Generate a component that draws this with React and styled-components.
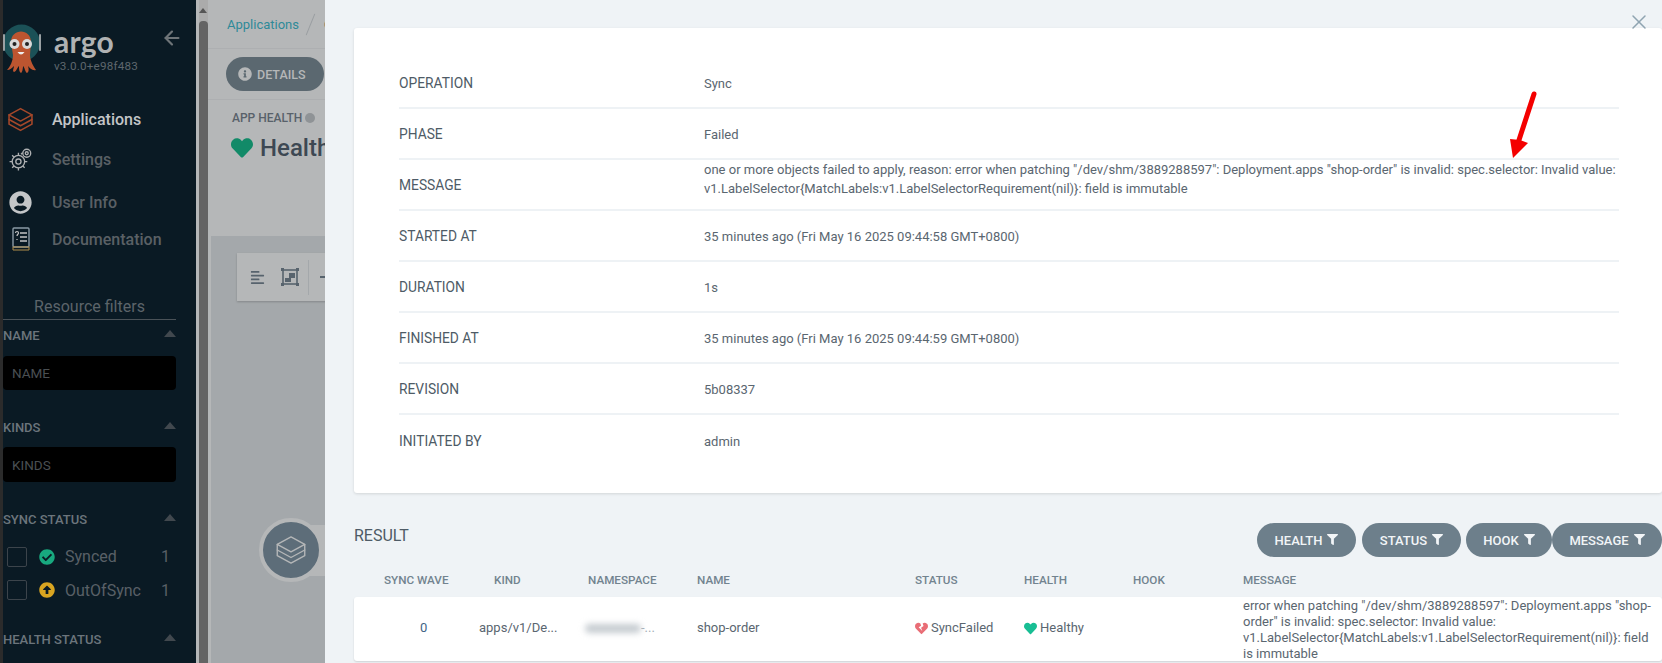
import React from 'react';
import styled, { createGlobalStyle } from 'styled-components';
import { X, ArrowLeft } from 'lucide-react';
import { FaHeart, FaHeartBroken, FaFilter, FaInfoCircle, FaUserCircle, FaCheckCircle, FaArrowAltCircleUp, FaAlignLeft } from 'react-icons/fa';

const Global = createGlobalStyle`
  html, body { margin: 0; padding: 0; height: 663px; overflow: hidden; background: #a4a8ab; }
  body { font-family: Roboto, "Liberation Sans", sans-serif; }
  * { box-sizing: border-box; }
  svg { flex: none; }
`;

const Page = styled.div`
  display: flex; width: 1662px; height: 663px; overflow: hidden; position: relative;
`;
const Sidebar = styled.aside`
  width: 196px; flex: none; background: #0a1a24; border-left: 3px solid #2b2b2b; color: #7c8287;
  display: flex; flex-direction: column; overflow: hidden;
`;
const Brand = styled.div`
  display: flex; height: 96px; padding: 26px 0 0 0; position: relative; flex: none;
`;
const BrandText = styled.div`
  margin-left: 51px; display: flex; flex-direction: column;
`;
const Wordmark = styled.div`
  font-family: Lato, sans-serif; font-size: 30px; font-weight: 700; line-height: 30px; height: 30px; color: #b0b2b3; letter-spacing: 0.2px;
`;
const Version = styled.div`
  font-size: 11.7px; line-height: 14px; margin-top: 3px; color: #5e666c; letter-spacing: 0.2px;
`;
const BackIcon = styled.div`
  position: absolute; left: 158px; top: 27px; color: #6e7478; display: flex;
`;
const Logo = styled.div`
  position: absolute; left: 0; top: 24px;
`;
const NavList = styled.nav`
  display: flex; flex-direction: column; flex: none;
`;
const NavRow = styled.div`
  display: flex; align-items: center; height: ${p => p.$h}px; color: ${p => p.$active ? '#c3c5c7' : '#5a6065'};
  font-size: 16px; font-weight: 500;
`;
const NavIcon = styled.span`
  width: 49px; display: flex; justify-content: center; padding-right: 14px; flex: none;
`;
const FilterTitle = styled.div`
  margin: 46px 0 0 0; width: 173px; text-align: center; border-bottom: 1px solid #4a5258; font-size: 16px; line-height: 21px; padding-bottom: 2px; color: #5c646a; flex: none;
`;
const SectionHead = styled.div`
  display: flex; justify-content: space-between; align-items: center; width: 173px; font-size: 13px; font-weight: 500; color: #6c757c;
  margin-top: ${p => p.$mt}px; height: 16px; flex: none;
`;
const Caret = styled.span`
  width: 0; height: 0; border-left: 6px solid transparent; border-right: 6px solid transparent; border-bottom: 7px solid #41484e; margin-bottom: 3px;
`;
const FilterInput = styled.div`
  width: 173px; height: ${p => p.$h}px; background: #000; border-radius: 4px; margin-top: ${p => p.$mt}px; padding-left: 9px; display: flex; align-items: center; font-size: 13.5px; color: #4a4f53; flex: none;
`;
const CheckRow = styled.div`
  display: flex; align-items: center; height: ${p => p.$h}px; margin-top: ${p => p.$mt || 0}px; width: 173px; padding-left: 4px; font-size: 16px; color: #596067; flex: none;
`;
const CheckBox = styled.span`
  width: 20px; height: 20px; border: 1px solid #3c444b; border-radius: 2px; margin-right: 12px; flex: none;
`;
const CheckLabel = styled.span`
  flex: 1; margin-left: 10px;
`;
const CheckCount = styled.span`
  padding-right: 6px;
`;
const Main = styled.main`
  width: 129px; flex: none; display: flex; background: #a4a8ab;
`;
const Scrollbar = styled.div`
  width: 12px; flex: none; position: relative; background: #ababab; border-left: 3px solid #b5b7b8;
`;
const ScrollThumb = styled.div`
  position: absolute; left: 0; right: 0; top: 21px; bottom: 0; background: #646464; border-radius: 4px 4px 0 0;
`;
const ScrollArrow = styled.div`
  position: absolute; left: 0; top: 8px; width: 0; height: 0; border-left: 4.5px solid transparent; border-right: 4.5px solid transparent; border-bottom: 5px solid #555;
`;
const MainBody = styled.div`
  flex: 1; min-width: 0; display: flex; flex-direction: column;
`;
const TopArea = styled.div`
  background: #b5b7b8; height: 236px; flex: none; display: flex; flex-direction: column; overflow: hidden; white-space: nowrap;
`;
const Crumb = styled.div`
  height: 49px; flex: none; padding: 0 0 0 19px; display: flex; align-items: center; font-size: 13px; color: #2f8a98; border-bottom: 1px solid #adafb1;
`;
const Slash = styled.span`
  width: 1px; height: 23px; background: #9a9ea1; transform: rotate(22deg); margin: 0 13px 0 11px; flex: none;
`;
const CrumbTail = styled.span`
  color: #333d47;
`;
const ToolRow = styled.div`
  height: 51px; flex: none; padding: 8px 0 0 18px; border-bottom: 1px solid #adafb1;
`;
const DetailsPill = styled.div`
  display: flex; align-items: center; gap: 5px; width: 98px; height: 34px; padding-left: 12px; border-radius: 17px; background: #5b6870; color: #b5b7b8; font-size: 12.5px; font-weight: 500;
`;
const HealthLabel = styled.div`
  margin: 11px 0 0 24px; font-size: 12px; line-height: 14px; font-weight: 500; color: #58616a; display: flex; align-items: center; gap: 3px;
`;
const Dot = styled.span`
  width: 10px; height: 10px; border-radius: 50%; background: #8f9396;
`;
const HealthValue = styled.div`
  margin: 9px 0 0 23px; display: flex; align-items: center; gap: 7px; font-size: 24px; line-height: 28px; font-weight: 500; color: #3d4853;
`;
const Canvas = styled.div`
  flex: 1; position: relative; border-left: 3px solid #b5b7b8; overflow: hidden;
`;
const GraphTools = styled.div`
  position: absolute; left: 26px; top: 17px; width: 100px; height: 48px; background: #b5b7b8; box-shadow: 0 1px 2px rgba(0,0,0,.2); display: flex; align-items: center; padding-left: 13px; gap: 16px; color: #57636d;
`;
const ToolSep = styled.span`
  width: 1px; height: 35px; background: #a4a8ab; margin-left: -7px; flex: none;
`;
const ToolDash = styled.span`
  width: 6px; height: 2px; background: #57636d; margin-left: -5px; flex: none;
`;
const NodeBand = styled.div`
  position: absolute; left: 90px; top: 289px; width: 30px; height: 51px; background: #b5b7b8;
`;
const NodeCircle = styled.div`
  position: absolute; left: 48px; top: 282px; width: 64px; height: 64px; border-radius: 50%; background: #5d6d79; border: 4px solid #b5b7b8; display: flex; align-items: center; justify-content: center;
`;
const Slide = styled.section`
  flex: 1; background: #eff3f6; padding: 28px 0 0 29px; min-width: 0; overflow: hidden;
`;
const CloseBtn = styled.div`
  position: absolute; top: 10px; right: 11px; color: #8fa4b1; display: flex;
`;
const Card = styled.div`
  width: 1308px; height: 465px; background: #fff; border-radius: 3px; box-shadow: 0 1px 3px rgba(0,0,0,.12); padding: 30px 43px 0 45px;
`;
const InfoRow = styled.div`
  display: flex; align-items: center; height: 51px; padding-top: 1px; border-bottom: ${p => p.$last ? 'none' : '2px solid #eef2f5'}; color: #5a6670; font-size: 13px; line-height: 19px;
`;
const InfoKey = styled.div`
  width: 305px; flex: none; text-transform: uppercase; font-size: 13.8px; color: #4e5b66;
`;
const InfoVal = styled.div`
  flex: 1; margin-bottom: ${p => p.$raised ? 12 : 0}px;
`;
const ResultHead = styled.div`
  width: 1308px; height: 72px; padding-top: 30px; display: flex; justify-content: space-between; align-items: flex-start;
`;
const ResultTitle = styled.div`
  font-size: 16px; line-height: 18px; margin-top: 4px; color: #4e5b66;
`;
const Pills = styled.div`
  display: flex;
`;
const Pill = styled.div`
  display: flex; align-items: center; justify-content: center; gap: 5px; width: ${p => p.$w}px; height: 34px; border-radius: 17px; background: #6d7f8b; color: #f2f5f7; font-size: 13px; font-weight: 500; margin-left: ${p => p.$ml || 0}px;
  svg { transform: translateY(-1px); }
`;
const Grid = styled.div`
  display: grid; grid-template-columns: 125px 106px 112px 218px 109px 109px 110px 1fr; width: 1308px;
`;
const HeadRow = styled(Grid)`
  height: 32px; padding-bottom: 2px; align-items: center; font-size: 11.7px; font-weight: 500; color: #72838f;
`;
const Cell = styled.div`
  padding-left: ${p => p.$pl || 0}px;
`;
const DataRow = styled(Grid)`
  background: #fff; height: 64px; border-radius: 3px; align-items: center; font-size: 13px; color: #5a6670; box-shadow: 0 1px 2px rgba(0,0,0,.14); line-height: 16px; padding-right: 10px;
  & > * { margin-bottom: 3px; }
  & > :last-child { margin-bottom: 0; margin-top: 1px; }
`;
const WaveCell = styled.div`
  padding-left: 66px; color: #3f6485;
`;
const StatusCell = styled.div`
  display: flex; align-items: center; gap: 3px;
`;
const NamespaceCell = styled.div`
  display: flex; align-items: center; color: #a3adb5;
`;
const Redacted = styled.div`
  width: 56px; height: 9px; border-radius: 5px; background: #c5cbd0; filter: blur(3px);
`;
const Arrow = styled.svg`
  position: absolute; left: 1505px; top: 88px;
`;

const StackIcon = ({ size, color, width = 1.5 }) => (
  <svg width={size} height={size} viewBox="0 0 24 24" fill="none" stroke={color} strokeWidth={width} strokeLinejoin="round" strokeLinecap="round">
    <path d="M12 1.500 L23 7.500 L12 13.500 L1 7.500 Z" />
    <path d="M1 7.500 V16.500 L12 22.500 L23 16.500 V7.500" />
    <path d="M1 12 L12 18 L23 12" />
  </svg>
);
const ArgoLogo = () => (
  <svg width="41" height="50" viewBox="0 0 41 50">
    <circle cx="18.500" cy="19" r="18.500" fill="#1b5157" />
    <rect x="0" y="10" width="2" height="17" fill="#9aa0a3" rx="1" />
    <rect x="36" y="10" width="2" height="17" fill="#9aa0a3" rx="1" />
    <path d="M8 18 C8 4 28 4 28 18 L27 31 C27 37 31 43 33 46 C29 47 27 44 25 42 C26 45 26 48 24 49 C22 48 22 44 20 42 C20 45 19 49 18 49 C16 48 16 45 16 42 C14 44 13 48 11 48 C9 47 11 44 11 42 C9 44 7 46 4 46 C7 43 10 37 10 31 Z" fill="#bc5530" />
    <circle cx="11.500" cy="20" r="5" fill="#d9d9d9" />
    <circle cx="24" cy="20" r="5" fill="#d9d9d9" />
    <circle cx="11.500" cy="20" r="2" fill="#222" />
    <circle cx="24" cy="20" r="2" fill="#222" />
    <path d="M14.500 28 Q18 33 21.500 28 Z" fill="#eee" />
  </svg>
);
const GearIcon = () => (
  <svg width="25" height="25" viewBox="0 0 24 24" fill="none" stroke="#aeb0b2" strokeWidth="1.300">
    <circle cx="10" cy="14" r="6" />
    <circle cx="10" cy="14" r="2.500" />
    <circle cx="18" cy="6" r="3.800" />
    <circle cx="18" cy="6" r="1.400" />
    <path d="M10 5.500v2.500M10 20v2.500M1.500 14H4M16 14h2.500M4 8l1.800 1.800M4 20l1.800-1.800M16 20l-1.800-1.800M12.500 7l1.500-1.500" />
  </svg>
);
const DocIcon = () => (
  <svg width="18" height="24" viewBox="0 0 18 24" fill="none">
    <rect x="1" y="1" width="16" height="19" rx="1" stroke="#8a9aa5" strokeWidth="1.400" />
    <path d="M1 20h16v3H1z" stroke="#b08d4a" strokeWidth="1" />
    <path d="M8 6h7M8 10h7M8 14h7" stroke="#c4c4c4" strokeWidth="1.400" />
    <path d="M3.500 6c0-2 3-2 3 0 0 1.300-1.500 1.300-1.500 3M5 12v1" stroke="#c4c4c4" strokeWidth="1.200" />
  </svg>
);
const FitIcon = () => (
  <svg width="18" height="18" viewBox="0 0 18 18" fill="none" stroke="#57636d">
    <rect x="2" y="2" width="14" height="14" strokeWidth="1.600" />
    <path d="M8 5h6v5H8zM4 10h6v4H4z" fill="#57636d" stroke="none" />
    <path d="M0 0h3v3H0zM15 0h3v3h-3zM0 15h3v3H0zM15 15h3v3h-3z" fill="#57636d" stroke="none" />
  </svg>
);

const infos = [
  ['Operation', 'Sync'],
  ['Phase', 'Failed'],
  ['Message', 'one or more objects failed to apply, reason: error when patching "/dev/shm/3889288597": Deployment.apps "shop-order" is invalid: spec.selector: Invalid value: v1.LabelSelector{MatchLabels:v1.LabelSelectorRequirement(nil)}: field is immutable', true],
  ['Started at', '35 minutes ago (Fri May 16 2025 09:44:58 GMT+0800)'],
  ['Duration', '1s'],
  ['Finished at', '35 minutes ago (Fri May 16 2025 09:44:59 GMT+0800)'],
  ['Revision', '5b08337'],
  ['Initiated by', 'admin'],
];

export default function App() {
  return (
    <Page>
      <Global />
      <Sidebar>
        <Brand>
          <Logo><ArgoLogo /></Logo>
          <BrandText>
            <Wordmark>argo</Wordmark>
            <Version>v3.0.0+e98f483</Version>
          </BrandText>
          <BackIcon><ArrowLeft size={22} strokeWidth={2.4} /></BackIcon>
        </Brand>
        <NavList>
          <NavRow $active $h={46}><NavIcon><StackIcon size={25} color="#a5482a" /></NavIcon>Applications</NavRow>
          <NavRow $h={34}><NavIcon><GearIcon /></NavIcon>Settings</NavRow>
          <NavRow $h={52}><NavIcon><FaUserCircle size={23} color="#c4c6c8" /></NavIcon>User Info</NavRow>
          <NavRow $h={22}><NavIcon><DocIcon /></NavIcon>Documentation</NavRow>
        </NavList>
        <FilterTitle>Resource filters</FilterTitle>
        <SectionHead $mt={7}>NAME<Caret /></SectionHead>
        <FilterInput $h={34} $mt={13}>NAME</FilterInput>
        <SectionHead $mt={29}>KINDS<Caret /></SectionHead>
        <FilterInput $h={35} $mt={12}>KINDS</FilterInput>
        <SectionHead $mt={29}>SYNC STATUS<Caret /></SectionHead>
        <CheckRow $h={33} $mt={13}><CheckBox /><FaCheckCircle size={16} color="#18a97f" /><CheckLabel>Synced</CheckLabel><CheckCount>1</CheckCount></CheckRow>
        <CheckRow $h={34}><CheckBox /><FaArrowAltCircleUp size={16} color="#d9a521" /><CheckLabel>OutOfSync</CheckLabel><CheckCount>1</CheckCount></CheckRow>
        <SectionHead $mt={24}>HEALTH STATUS<Caret /></SectionHead>
      </Sidebar>
      <Main>
        <Scrollbar><ScrollArrow /><ScrollThumb /></Scrollbar>
        <MainBody>
          <TopArea>
            <Crumb>Applications<Slash /><CrumbTail>C</CrumbTail></Crumb>
            <ToolRow><DetailsPill><FaInfoCircle size={14} />DETAILS</DetailsPill></ToolRow>
            <HealthLabel>APP HEALTH<Dot /></HealthLabel>
            <HealthValue><FaHeart size={22} color="#128a68" />Health</HealthValue>
          </TopArea>
          <Canvas>
            <GraphTools><FaAlignLeft size={15} /><FitIcon /><ToolSep /><ToolDash /></GraphTools>
            <NodeBand />
            <NodeCircle><StackIcon size={30} color="#b5b7b8" width={1.1} /></NodeCircle>
          </Canvas>
        </MainBody>
      </Main>
      <Slide>
        <CloseBtn><X size={24} strokeWidth={1.5} /></CloseBtn>
        <Card>
          {infos.map(([k, v, raised], i) => (
            <InfoRow key={k} $last={i === infos.length - 1}>
              <InfoKey>{k}</InfoKey>
              <InfoVal $raised={raised}>{v}</InfoVal>
            </InfoRow>
          ))}
        </Card>
        <ResultHead>
          <ResultTitle>RESULT</ResultTitle>
          <Pills>
            <Pill $w={99}>HEALTH<FaFilter size={11} /></Pill>
            <Pill $w={99} $ml={6}>STATUS<FaFilter size={11} /></Pill>
            <Pill $w={86} $ml={5}>HOOK<FaFilter size={11} /></Pill>
            <Pill $w={110}>MESSAGE<FaFilter size={11} /></Pill>
          </Pills>
        </ResultHead>
        <HeadRow>
          <Cell $pl={30}>SYNC WAVE</Cell>
          <Cell $pl={15}>KIND</Cell>
          <Cell $pl={3}>NAMESPACE</Cell>
          <Cell>NAME</Cell>
          <Cell>STATUS</Cell>
          <Cell>HEALTH</Cell>
          <Cell>HOOK</Cell>
          <Cell>MESSAGE</Cell>
        </HeadRow>
        <DataRow>
          <WaveCell>0</WaveCell>
          <Cell>apps/v1/De...</Cell>
          <NamespaceCell><Redacted />-...</NamespaceCell>
          <Cell>shop-order</Cell>
          <StatusCell><FaHeartBroken size={13} color="#e96d76" />SyncFailed</StatusCell>
          <StatusCell><FaHeart size={13} color="#18be94" />Healthy</StatusCell>
          <Cell />
          <Cell>error when patching "/dev/shm/3889288597": Deployment.apps "shop-order" is invalid: spec.selector: Invalid value: v1.LabelSelector{'{'}MatchLabels:v1.LabelSelectorRequirement(nil){'}'}: field is immutable</Cell>
        </DataRow>
      </Slide>
      <Arrow width="32" height="74" viewBox="0 0 32 74">
        <path d="M29 6 L14 52" stroke="#f40000" strokeWidth="5" strokeLinecap="round" fill="none" />
        <path d="M5 51 L8 70 L23 55 L15 52 Z" fill="#f40000" />
      </Arrow>
    </Page>
  );
}
